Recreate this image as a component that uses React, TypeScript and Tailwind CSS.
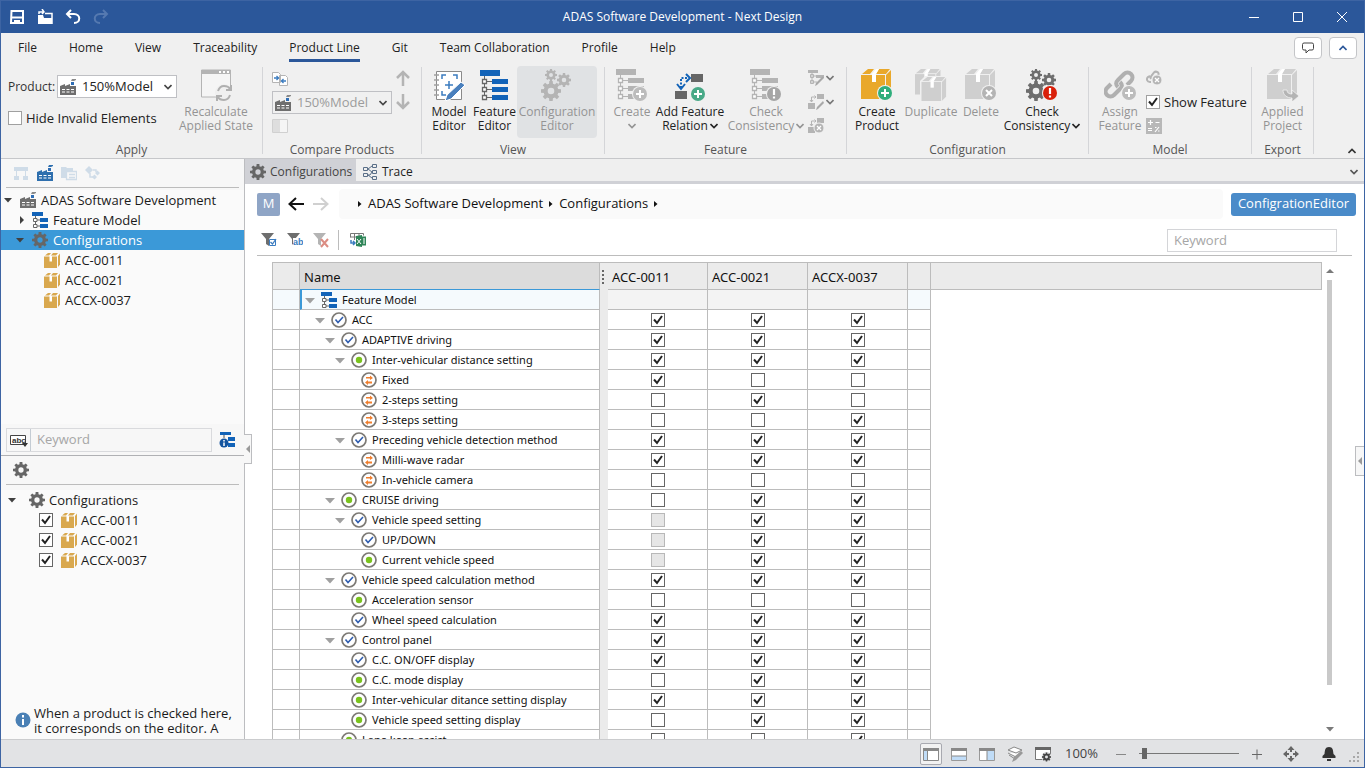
import { ReactNode } from 'react'
import clsx from 'clsx'

type TKind = 'model' | 'mandatory' | 'optional' | 'alternative'
type TCell = 0 | 1 | 2

type TFeature = {
  name: string
  level: number
  kind: TKind
  expanded?: boolean
  cells?: [TCell, TCell, TCell]
}

const PRODUCTS = ['ACC-0011', 'ACC-0021', 'ACCX-0037']

// cells: 0 = off, 1 = on, 2 = disabled
const FEATURES: TFeature[] = [
  { name: 'Feature Model', level: 0, kind: 'model', expanded: true },
  { name: 'ACC', level: 1, kind: 'mandatory', expanded: true, cells: [1, 1, 1] },
  { name: 'ADAPTIVE driving', level: 2, kind: 'mandatory', expanded: true, cells: [1, 1, 1] },
  { name: 'Inter-vehicular distance setting', level: 3, kind: 'optional', expanded: true, cells: [1, 1, 1] },
  { name: 'Fixed', level: 4, kind: 'alternative', cells: [1, 0, 0] },
  { name: '2-steps setting', level: 4, kind: 'alternative', cells: [0, 1, 0] },
  { name: '3-steps setting', level: 4, kind: 'alternative', cells: [0, 0, 1] },
  { name: 'Preceding vehicle detection method', level: 3, kind: 'mandatory', expanded: true, cells: [1, 1, 1] },
  { name: 'Milli-wave radar', level: 4, kind: 'alternative', cells: [1, 1, 1] },
  { name: 'In-vehicle camera', level: 4, kind: 'alternative', cells: [0, 0, 0] },
  { name: 'CRUISE driving', level: 2, kind: 'optional', expanded: true, cells: [0, 1, 1] },
  { name: 'Vehicle speed setting', level: 3, kind: 'mandatory', expanded: true, cells: [2, 1, 1] },
  { name: 'UP/DOWN', level: 4, kind: 'mandatory', cells: [2, 1, 1] },
  { name: 'Current vehicle speed', level: 4, kind: 'optional', cells: [2, 1, 1] },
  { name: 'Vehicle speed calculation method', level: 2, kind: 'mandatory', expanded: true, cells: [1, 1, 1] },
  { name: 'Acceleration sensor', level: 3, kind: 'optional', cells: [0, 0, 0] },
  { name: 'Wheel speed calculation', level: 3, kind: 'mandatory', cells: [1, 1, 1] },
  { name: 'Control panel', level: 2, kind: 'mandatory', expanded: true, cells: [1, 1, 1] },
  { name: 'C.C. ON/OFF display', level: 3, kind: 'mandatory', cells: [1, 1, 1] },
  { name: 'C.C. mode display', level: 3, kind: 'optional', cells: [0, 1, 1] },
  { name: 'Inter-vehicular ditance setting display', level: 3, kind: 'optional', cells: [1, 1, 1] },
  { name: 'Vehicle speed setting display', level: 3, kind: 'optional', cells: [0, 1, 1] },
  { name: 'Lane keep assist', level: 2, kind: 'optional', cells: [0, 0, 1] },
]

const MENU = ['File', 'Home', 'View', 'Traceability', 'Product Line', 'Git', 'Team Collaboration', 'Profile', 'Help']

/* ---------- icons ---------- */

const Svg = ({ size = 16, className, children }: { size?: number; className?: string; children: ReactNode }) => (
  <svg width={size} height={size} viewBox={`0 0 ${size} ${size}`} className={clsx('shrink-0', className)} fill="none" aria-hidden="true">
    {children}
  </svg>
)

const FactoryIcon = ({ body = '#6e6e6e', accent = '#2f6eb5', smoke = '#8a8a8a' }) => (
  <Svg>
    <path d="M0 16V7l5-2v2l5-2v2h6v9z" fill={body} />
    <path d="M11 3h3v3h-3z" fill={accent} />
    <path d="M11 2l1-2h4v1l-2 1z" fill={smoke} />
    <path d="M2 10.500h3M6.500 10.500h3M11 10.500h3M2 13h3M6.500 13h3M11 13h3" stroke="#fff" strokeWidth="1.200" />
  </Svg>
)

const TreeBars = ({ bar = '#1263b8', line = '#666' }) => (
  <>
    <path d="M0 0h20v6H0zM12 9h16v5H12zM12 17h16v5H12zM12 25h16v5H12z" fill={bar} />
    <path d="M4.500 6v3M4.500 14v3M4.500 22v3M7 11.500h5M7 19.500h5M7 27.500h5" stroke={line} strokeWidth="1" />
    <path d="M2.500 9.500h4v4h-4zM2.500 17.500h4v4h-4zM2.500 25.500h4v4h-4z" stroke={line} strokeWidth="1.300" fill="#fff" />
  </>
)

const FeatureModelIcon = () => (
  <Svg>
    <path d="M0 0h11v4H0zM8 6h8v4H8zM8 12h8v4H8z" fill="#1263b8" />
    <path d="M3.500 4v2M3.500 10v2M5 8h3M5 14h3" stroke="#666" />
    <path d="M1.500 6.500h3.500v3H1.500zM1.500 12.500h3.500v3H1.500z" stroke="#666" fill="#fff" />
  </Svg>
)

const TEETH = [0, 45, 90, 135, 180, 225, 270, 315]

const GearShape = ({ cx, cy, r, color = '#666' }: { cx: number; cy: number; r: number; color?: string }) => (
  <g>
    <circle cx={cx} cy={cy} r={r * 0.54} stroke={color} strokeWidth={r * 0.42} />
    {TEETH.map(angle => (
      <path
        key={angle}
        d={`M${cx - r * 0.2} ${cy - r * 0.65}L${cx - r * 0.17} ${cy - r}h${r * 0.34}L${cx + r * 0.2} ${cy - r * 0.65}z`}
        fill={color}
        transform={`rotate(${angle} ${cx} ${cy})`}
      />
    ))}
  </g>
)

const GearIcon = ({ color = '#666' }) => (
  <Svg>
    <GearShape cx={8} cy={8} r={8} color={color} />
  </Svg>
)

const BoxIcon = () => (
  <Svg>
    <path d="M0 4.500h13V16H0z" fill="#d9a84e" />
    <path d="M1 3.500L4 1h3L5 3.500zM7 3.500L9 1h5l-2 2.500z" fill="#d9a84e" />
    <path d="M14 4l2-2.500v11L14 15z" fill="#d9a84e" />
    <path d="M5.500 4h2.500v5.500H5.500z" fill="#fff" />
  </Svg>
)

const BigBox = ({ color }: { color: string }) => (
  <>
    <path d="M0 6h24v24H0z" fill={color} />
    <path d="M1 5l6-5h6L9 5zM15 5l3-5h11l-4 5z" fill={color} />
    <path d="M25 6l5-5v23l-5 5z" fill={color} />
    <path d="M11 5h4v8h-4z" fill="#fff" />
    <path d="M11 5l4-5h3l-3 5z" fill="#fff" />
  </>
)

const Badge = ({ color, kind, x = 24, y = 24 }: { color: string; kind: 'plus' | 'cross' | 'alert'; x?: number; y?: number }) => (
  <g transform={`translate(${x} ${y})`}>
    <circle r="8" fill="#f0f0f0" />
    <circle r="7" fill={color} />
    {kind === 'plus' && <path d="M-4 0h8M0-4v8" stroke="#fff" strokeWidth="2" />}
    {kind === 'cross' && <path d="M-3-3l6 6M3-3l-6 6" stroke="#fff" strokeWidth="2" />}
    {kind === 'alert' && <path d="M0-5v6M0 2.500v2" stroke="#fff" strokeWidth="2.200" />}
  </g>
)

const KindIcon = ({ kind }: { kind: TKind }) => {
  if (kind === 'model') return <FeatureModelIcon />
  return (
    <Svg>
      <circle cx="8" cy="8" r="7" stroke="#7d7a75" strokeWidth="1.700" fill="#fff" />
      {kind === 'mandatory' && <path d="M4.500 7.500l2.500 3 5-5.500" stroke="#2e5cae" strokeWidth="1.600" />}
      {kind === 'optional' && <circle cx="8" cy="8" r="3.200" fill="#7ac31d" />}
      {kind === 'alternative' && (
        <path d="M5 5h4V3.500L12 6 9 8V6.500H5zM11 9.500H7V8L4 10.500 7 13v-1.500h4z" fill="#f07f2e" />
      )}
    </Svg>
  )
}

const Chevron = ({ className, up }: { className?: string; up?: boolean }) => (
  <svg width="8" height="6" viewBox="0 0 8 6" fill="none" className={clsx('shrink-0', className)} aria-hidden="true">
    <path d={up ? 'M0.500 5L4 1.500 7.500 5' : 'M0.500 1L4 4.500 7.500 1'} stroke="currentColor" strokeWidth="1.600" />
  </svg>
)

const Caret = ({ dir = 'down', color = '#404040' }: { dir?: 'down' | 'right' | 'up' | 'left'; color?: string }) => {
  const paths = { down: 'M0 2h8L4 6.500z', right: 'M2 0v8l4-4z', up: 'M0 6h8L4 2z', left: 'M6 0v8L2 4z' }
  return (
    <svg width="8" height="8" viewBox="0 0 8 8" className="shrink-0" aria-hidden="true">
      <path d={paths[dir]} fill={color} />
    </svg>
  )
}

const CrumbMark = () => (
  <svg width="4" height="6" viewBox="0 0 4 6" className="shrink-0" aria-hidden="true">
    <path d="M0 0v6l3.500-3z" fill="#111" />
  </svg>
)

const GEARS: [number, number, number][] = [
  [10, 6, 6],
  [23, 11, 7],
  [10, 22, 10],
]

const GearsIcon = ({ color, alert }: { color: string; alert?: boolean }) => (
  <Svg size={32}>
    {GEARS.map(([cx, cy, r]) => (
      <GearShape key={r} cx={cx} cy={cy} r={r} color={color} />
    ))}
    {alert && <Badge color="#d9200a" kind="alert" />}
  </Svg>
)

/* ---------- form bits ---------- */

const CheckBox = ({ label, checked, disabled, light }: { label: string; checked?: boolean; disabled?: boolean; light?: boolean }) => (
  <span className="grid size-3.5 shrink-0">
    <input
      type="checkbox"
      aria-label={label}
      defaultChecked={checked}
      disabled={disabled}
      className={clsx(
        'peer size-3.5 appearance-none border bg-white [grid-area:1/1] disabled:border-[#b8b8b8] disabled:bg-[#e6e6e6]',
        light ? 'border-[#a0a0a0]' : 'border-[#666]'
      )}
    />
    <svg
      width="14"
      height="14"
      viewBox="0 0 14 14"
      fill="none"
      className="pointer-events-none invisible [grid-area:1/1] peer-checked:visible"
      aria-hidden="true"
    >
      <path d="M3 6.500l3 3.500 5-7" stroke="#222" strokeWidth="2" />
    </svg>
  </span>
)

const ModelSelect = ({ label, disabled }: { label: string; disabled?: boolean }) => (
  <div className={clsx('flex h-[23px] w-[120px] shrink-0 items-center border border-[#bfc0c4] px-0.5', !disabled && 'bg-white')}>
    <FactoryIcon />
    <select
      aria-label={label}
      disabled={disabled}
      className="w-full min-w-0 appearance-none bg-transparent pl-1.5 text-[13px] text-[#222] disabled:text-[#9c9c9c]"
    >
      <option>150%Model</option>
    </select>
    <Chevron className="mr-0.5 text-[#444]" />
  </div>
)

/* ---------- ribbon ---------- */

type TRibbonButtonProps = {
  icon: ReactNode
  lines: string[]
  width: string
  disabled?: boolean
  active?: boolean
  menu?: boolean
}

const RibbonButton = ({ icon, lines, width, disabled, active, menu }: TRibbonButtonProps) => (
  <button
    type="button"
    disabled={disabled}
    className={clsx(
      'flex h-[72px] shrink-0 flex-col items-center pt-[3px] text-xs leading-[14px] whitespace-nowrap',
      width,
      disabled ? 'text-[#949494]' : 'text-[#222]',
      active && 'rounded-sm bg-[#e0e2e4]'
    )}
  >
    {icon}
    <span className="mt-1 flex flex-col items-center">
      {lines.map((line, i) => (
        <span key={line} className="flex items-center gap-0.5">
          {line}
          {menu && lines.length > 1 && i === lines.length - 1 && <Chevron />}
        </span>
      ))}
      {menu && lines.length === 1 && <Chevron className="mt-1" />}
    </span>
  </button>
)

const RibbonGroup = ({ title, width, children }: { title: string; width: string; children: ReactNode }) => (
  <section className={clsx('flex shrink-0', width)} aria-label={title}>
    <div className="flex min-w-0 flex-1 flex-col">
      <div className="flex h-[72px] gap-1">{children}</div>
      <h2 className="mt-1 text-center text-xs leading-4 text-[#555]">{title}</h2>
    </div>
    <div className="mt-px mb-1 w-px bg-[#d4d5d8]" />
  </section>
)

const SmallTree = () => (
  <>
    <path d="M0 0h10v3H0zM8 5h8v3H8z" fill="#b4b4b4" />
    <path d="M2.500 4.500h3v3h-3zM2.500 10.500h3v3h-3zM4 3v11M6 6h2M6 12h3" stroke="#b4b4b4" />
  </>
)

const SmallRelation = () => (
  <>
    <path d="M9 0h7v5H9zM0 9h7v6H0z" fill="#b4b4b4" />
    <path d="M3.500 8V3H8M2 6l1.500 2L5 6M6.500 1.500L8 3 6.500 4.500" stroke="#b4b4b4" />
  </>
)

const Ribbon = () => (
  <div className="flex h-[97px] overflow-hidden border-b border-[#c6c7ca] pt-1">
    <RibbonGroup title="Apply" width="w-[262px]">
      <div className="flex w-[173px] shrink-0 flex-col gap-3 pt-[9px] pl-[7px]">
        <div className="flex items-center gap-[5px]">
          <span className="w-11 text-xs text-[#333]">Product:</span>
          <ModelSelect label="Product" />
        </div>
        <label className="flex items-center gap-1 text-[13px] leading-4 whitespace-nowrap text-[#222]">
          <CheckBox label="Hide Invalid Elements" light />
          Hide Invalid Elements
        </label>
      </div>
      <RibbonButton
        width="w-[76px]"
        disabled
        lines={['Recalculate', 'Applied State']}
        icon={
          <Svg size={32}>
            <path d="M1.500 1h29v27h-29z" stroke="#b4b4b4" fill="#f5f5f5" />
            <path d="M1 1h30v4H1z" fill="#b4b4b4" />
            <path d="M19 3h2M23 3h2M27 3h2" stroke="#fff" strokeWidth="2" />
            <circle cx="24" cy="24" r="9" fill="#f0f0f0" />
            <path d="M18 22c1-3 3-5 6-5s5 1 6 3M31 16v5h-5M30 26c-1 3-3 5-6 5s-5-1-6-3M17 32v-5h5" stroke="#b0b0b0" strokeWidth="2" />
          </Svg>
        }
      />
    </RibbonGroup>

    <RibbonGroup title="Compare Products" width="w-[159px]">
      <div className="flex flex-col gap-1 pt-1 pl-[9px]">
        <button type="button" aria-label="Compare" disabled className="h-[17px] w-4">
          <Svg>
            <path d="M0.500 1.500h6l2 2v8h-8zM7.500 4.500h6l2 2v8h-8z" stroke="#b4b4b4" fill="#fff" />
            <path d="M2 7h5M4.500 5l2 2-2 2M14 10h-5M11.500 8l-2 2 2 2" stroke="#3b7cc0" strokeWidth="1.300" />
          </Svg>
        </button>
        <ModelSelect label="Compared product" disabled />
        <button type="button" aria-label="Side by side" disabled className="h-4 w-4">
          <Svg>
            <path d="M0.500 1.500h15v13H0.500z" stroke="#d0d0d0" fill="#f5f5f5" />
            <path d="M1 2h7v12H1z" fill="#dedede" />
          </Svg>
        </button>
      </div>
      <div className="flex flex-col gap-2 pt-1">
        <button type="button" aria-label="Previous difference" disabled>
          <Svg>
            <path d="M7 16V2M1 8l6-6 6 6" stroke="#b4b4b4" strokeWidth="2.500" />
          </Svg>
        </button>
        <button type="button" aria-label="Next difference" disabled>
          <Svg>
            <path d="M7 0v14M1 8l6 6 6-6" stroke="#b4b4b4" strokeWidth="2.500" />
          </Svg>
        </button>
      </div>
    </RibbonGroup>

    <RibbonGroup title="View" width="w-[183px]">
      <RibbonButton
        width="ml-1 w-[46px]"
        lines={['Model', 'Editor']}
        icon={
          <Svg size={32}>
            <path d="M3.500 2.500h25v28h-25z" stroke="#8a8a8a" fill="#fff" />
            <path d="M1 6h5M1 11h5M1 16h5M1 21h5M1 26h5" stroke="#a0a0a0" strokeWidth="1.500" />
            <path d="M9 10V6h4M20 6h4v4M9 22v4h4M16 12v8M12 16h8" stroke="#3b7cc0" strokeWidth="1.500" />
            <path d="M12 32l2-6 14-13 4 3-14 14z" fill="#4a80bd" stroke="#fff" />
          </Svg>
        }
      />
      <RibbonButton
        width="w-[37px]"
        lines={['Feature', 'Editor']}
        icon={
          <Svg size={32}>
            <g transform="translate(1 1)">
              <TreeBars />
            </g>
          </Svg>
        }
      />
      <RibbonButton width="w-20" lines={['Configuration', 'Editor']} disabled active icon={<GearsIcon color="#b4b4b4" />} />
    </RibbonGroup>

    <RibbonGroup title="Feature" width="w-[242px]">
      <RibbonButton
        width="ml-[7px] w-10"
        lines={['Create']}
        disabled
        menu
        icon={
          <Svg size={32}>
            <TreeBars bar="#b4b4b4" line="#b4b4b4" />
            <Badge color="#bcbcbc" kind="plus" x={24} y={25} />
          </Svg>
        }
      />
      <RibbonButton
        width="w-[68px]"
        lines={['Add Feature', 'Relation']}
        menu
        icon={
          <Svg size={32}>
            <path d="M17 5h12v8H17zM1 22h12v8H1z" fill="#666" />
            <path d="M7 19V9h7" stroke="#1263b8" strokeWidth="2" strokeDasharray="2 1.500" />
            <path d="M3 15l4 5 4-5M12 5l4 4-4 4" stroke="#1263b8" strokeWidth="2" />
            <Badge color="#48a987" kind="plus" x={24} y={25} />
          </Svg>
        }
      />
      <RibbonButton
        width="w-[76px]"
        lines={['Check', 'Consistency']}
        disabled
        menu
        icon={
          <Svg size={32}>
            <TreeBars bar="#b4b4b4" line="#b4b4b4" />
            <Badge color="#a6a6a6" kind="alert" x={24} y={25} />
          </Svg>
        }
      />
      <div className="flex flex-col gap-2 pt-1 text-[#777]">
        <button type="button" aria-label="Edit feature" disabled className="flex items-center gap-0.5">
          <Svg>
            <SmallTree />
            <path d="M7 16l1-3 7-7 1 2-7 7z" fill="#a8a8a8" />
          </Svg>
          <Chevron />
        </button>
        <button type="button" aria-label="Edit relation" disabled className="flex items-center gap-0.5">
          <Svg>
            <SmallRelation />
            <path d="M8 16l1-3 6-6 1 2-6 6z" fill="#a8a8a8" />
          </Svg>
          <Chevron />
        </button>
        <button type="button" aria-label="Delete relation" disabled>
          <Svg>
            <SmallRelation />
            <circle cx="11" cy="10" r="5" fill="#b4b4b4" stroke="#f0f0f0" />
            <path d="M9 8l4 4M13 8l-4 4" stroke="#fff" strokeWidth="1.300" />
          </Svg>
        </button>
      </div>
    </RibbonGroup>

    <RibbonGroup title="Configuration" width="w-[242px]">
      <RibbonButton
        width="ml-[7px] w-[46px]"
        lines={['Create', 'Product']}
        icon={
          <Svg size={32}>
            <BigBox color="#e9a82b" />
            <Badge color="#2fae7c" kind="plus" />
          </Svg>
        }
      />
      <RibbonButton
        width="w-[54px]"
        lines={['Duplicate']}
        disabled
        icon={
          <Svg size={32}>
            <g transform="scale(0.850)">
              <BigBox color="#cfcfcf" />
            </g>
            <path d="M5 12l5-5h22v20l-4 5H5z" fill="#f0f0f0" />
            <g transform="translate(6.500 8) scale(0.820)">
              <BigBox color="#cfcfcf" />
            </g>
          </Svg>
        }
      />
      <RibbonButton
        width="w-[38px]"
        lines={['Delete']}
        disabled
        icon={
          <Svg size={32}>
            <BigBox color="#cfcfcf" />
            <Badge color="#b4b4b4" kind="cross" />
          </Svg>
        }
      />
      <RibbonButton width="w-[76px]" lines={['Check', 'Consistency']} menu icon={<GearsIcon color="#6e6e6e" alert />} />
    </RibbonGroup>

    <RibbonGroup title="Model" width="w-[163px]">
      <RibbonButton
        width="ml-[9px] w-11"
        lines={['Assign', 'Feature']}
        disabled
        icon={
          <Svg size={32}>
            <path
              d="M14 18c-3-3-2-5 0-7l6-6c2-2 5-2 7 0s2 5 0 7l-4 4M16 13c3 3 2 5 0 7l-6 6c-2 2-5 2-7 0s-2-5 0-7l4-4"
              stroke="#b0b0b0"
              strokeWidth="4"
            />
            <Badge color="#bcbcbc" kind="plus" x={25} y={24} />
          </Svg>
        }
      />
      <div className="flex flex-col items-start gap-2 pt-1">
        <button type="button" aria-label="Unassign feature" disabled>
          <Svg>
            <path d="M5 12H4c-3 0-4-3-2-5l2-1M5 9c-1-2 0-3 1-4l2-2.500c2-2 6 0 4 3" stroke="#b4b4b4" strokeWidth="2" />
            <circle cx="11" cy="10" r="5" fill="#b4b4b4" stroke="#f0f0f0" />
            <path d="M9 8l4 4M13 8l-4 4" stroke="#fff" strokeWidth="1.300" />
          </Svg>
        </button>
        <label className="flex items-center gap-1 text-[13px] leading-4 whitespace-nowrap text-[#222]">
          <CheckBox label="Show Feature" checked light />
          Show Feature
        </label>
        <button type="button" aria-label="Formula" disabled>
          <Svg>
            <path d="M0 0h16v16H0z" fill="#b8b8b8" />
            <path d="M2 4.500h5M4.500 2v5M9.500 4.500h4M2 10.500h4M2 12.500h4M9 14l4-5M9 9.500h1.500M12 13h1.500" stroke="#fff" strokeWidth="1.200" />
          </Svg>
        </button>
      </div>
    </RibbonGroup>

    <RibbonGroup title="Export" width="w-[62px]">
      <RibbonButton
        width="mx-auto w-[50px]"
        lines={['Applied', 'Project']}
        disabled
        icon={
          <Svg size={32}>
            <BigBox color="#cfcfcf" />
            <path d="M16 21h4c0 3 2 4 5 4v-4l7 6-7 6v-4c-5 0-9-3-9-8z" fill="#b4b4b4" stroke="#f0f0f0" strokeWidth="0.800" />
          </Svg>
        }
      />
    </RibbonGroup>
    <button type="button" aria-label="Collapse ribbon" className="mr-2 mb-1 ml-auto self-end text-[#333]">
      <Chevron up />
    </button>
  </div>
)

/* ---------- window chrome ---------- */

const TitleBar = () => (
  <header className="grid h-8 shrink-0 grid-cols-[1fr_auto_1fr] items-center bg-[#2b579a] text-white">
    <div className="flex items-center gap-3 pl-2">
      <button type="button" aria-label="Save">
        <Svg>
          <path d="M2.500 2h11.500v12H2z" stroke="#fff" strokeWidth="2" />
          <path d="M2 8.500h12M5 12h6M6 11v4M10 11v4" stroke="#fff" strokeWidth="2" />
        </Svg>
      </button>
      <button type="button" aria-label="Open">
        <Svg>
          <path d="M1 15V6h5l1 3h8v6z" fill="#fff" />
          <path d="M8 4.500h7V15M2 5V3h5M5 0l2 3-2 2" stroke="#fff" strokeWidth="1.500" />
        </Svg>
      </button>
      <button type="button" aria-label="Undo">
        <Svg>
          <path d="M6 1L2 5l4 4M2 5h7c7 0 7 9 0 9" stroke="#fff" strokeWidth="2" />
        </Svg>
      </button>
      <button type="button" aria-label="Redo" disabled>
        <Svg>
          <path d="M10 1l4 4-4 4M14 5H7C0 5 0 14 7 14" stroke="#5579b0" strokeWidth="2" />
        </Svg>
      </button>
    </div>
    <h1 className="text-xs">ADAS Software Development - Next Design</h1>
    <div className="flex items-center justify-end gap-7 pr-3.5">
      <button type="button" aria-label="Minimize">
        <Svg>
          <path d="M3 8.500h10" stroke="#fff" />
        </Svg>
      </button>
      <button type="button" aria-label="Maximize">
        <Svg>
          <path d="M3.500 3.500h9v9h-9z" stroke="#fff" />
        </Svg>
      </button>
      <button type="button" aria-label="Close">
        <Svg>
          <path d="M3 3l10 10M13 3L3 13" stroke="#fff" />
        </Svg>
      </button>
    </div>
  </header>
)

const MenuBar = () => (
  <nav className="flex h-[29px] shrink-0 items-stretch pl-[17px]">
    <div className="flex gap-8">
      {MENU.map(item => (
        <a
          key={item}
          href="#"
          className={clsx(
            'border-b-[3px] text-xs leading-[29px] whitespace-nowrap text-[#222]',
            item === 'Product Line' ? 'border-[#2b579a]' : 'border-transparent'
          )}
        >
          {item}
        </a>
      ))}
    </div>
    <div className="mt-1 mr-[7px] ml-auto flex gap-[7px]">
      <button type="button" aria-label="Feedback" className="grid h-[22px] w-7 place-items-center rounded border border-[#c4c5c8] bg-white">
        <Svg>
          <path d="M4 3h8q1.500 0 1.500 1.500v4Q13.500 10 12 10H9l-3 3v-3H4q-1.500 0-1.500-1.500v-4Q2.500 3 4 3z" stroke="#444" />
        </Svg>
      </button>
      <button type="button" aria-label="Hide menu" className="grid h-[22px] w-7 place-items-center rounded border border-[#c4c5c8] bg-white text-[#2b579a]">
        <Chevron up />
      </button>
    </div>
  </nav>
)

/* ---------- left panel ---------- */

const LeftPanel = () => (
  <aside className="relative flex w-[244px] shrink-0 flex-col border-r border-[#bcbdc0] bg-[#f7f7f7] text-[13px] text-[#1a1a1a]">
    <div className="mr-[5px] ml-[5px] flex h-[29px] shrink-0 items-center gap-2 border-b border-[#bcbcbc] pl-[7px]">
      <button type="button" aria-label="Model view">
        <Svg>
          <path d="M1 2h14v4H1zM1 11h5v4H1zM10 11h5v4h-5z" fill="#cfdce8" />
          <path d="M3.500 6v5M12.500 6v5" stroke="#cfdce8" />
        </Svg>
      </button>
      <button type="button" aria-label="Product line view">
        <FactoryIcon body="#2e6fae" smoke="#2e6fae" />
      </button>
      <button type="button" aria-label="Profile view">
        <Svg>
          <path d="M0 2h5l1 1h6v3H5v7H0z" fill="#cfdce8" />
          <path d="M5.500 6.500h10v8h-10zM8 9.500h6M8 12.500h6" stroke="#cfdce8" strokeWidth="1.300" />
        </Svg>
      </button>
      <button type="button" aria-label="Relation view">
        <Svg>
          <path d="M0 5l4-4 4 4-4 4z" fill="#cfdce8" />
          <path d="M8 5h3v2M5 8v4h3" stroke="#cfdce8" strokeWidth="1.500" />
          <path d="M7 12l2.500-2.500L12 12l-2.500 2.500zM10 8l2.500-2.500L15 8l-2.500 2.500z" fill="#cfdce8" />
        </Svg>
      </button>
    </div>

    <ul className="mt-0.5 min-h-0 flex-1 overflow-hidden bg-[#fafafa] leading-5">
      <li className="flex h-5 items-center pl-[3px]">
        <Caret />
        <span className="ml-2 flex items-center gap-[5px]">
          <FactoryIcon />
          ADAS Software Development
        </span>
      </li>
      <li className="flex h-5 items-center pl-[17px]">
        <Caret dir="right" />
        <span className="ml-1.5 flex items-center gap-[5px]">
          <FeatureModelIcon />
          Feature Model
        </span>
      </li>
      <li className="flex h-5 items-center bg-[#3b99d8] pl-[15px] text-white">
        <Caret />
        <span className="ml-2 flex items-center gap-[5px]">
          <GearIcon />
          Configurations
        </span>
      </li>
      {PRODUCTS.map(product => (
        <li key={product} className="flex h-5 items-center gap-[5px] pl-[43px]">
          <BoxIcon />
          {product}
        </li>
      ))}
    </ul>

    <div className="flex h-8 shrink-0 items-start border-b border-[#b0b1b4] pt-1 pb-1 pl-[5px]">
      <div className="flex h-6 w-[206px] items-center border border-[#d9dadd]">
        <button type="button" aria-label="Search mode" className="flex h-full w-6 items-center justify-center border-r border-[#c4ccd4]">
          <svg width="18" height="14" viewBox="0 0 18 14" aria-hidden="true">
            <path d="M0.500 2.500h15v9H0.500z" stroke="#444" fill="#fff" />
            <text x="2" y="10" fontSize="8" fontWeight="700" fill="#333" fontFamily="Liberation Sans, sans-serif">
              abc
            </text>
            <path d="M12 10h6l-3 4z" fill="#333" />
          </svg>
        </button>
        <input
          aria-label="Search tree"
          placeholder="Keyword"
          className="min-w-0 flex-1 bg-transparent pl-1.5 outline-none placeholder:text-[#a6a6a6]"
        />
      </div>
      <button type="button" aria-label="Feature details" className="mt-1 ml-[7px]">
        <Svg>
          <path d="M1 0h11v3H1zM9 5h7v4H9zM9 11h7v4H9z" fill="#1263b8" />
          <path d="M5 3v3" stroke="#555" />
          <circle cx="5" cy="11" r="4.500" fill="#14559f" />
          <path d="M5 8v1.500M5 10.500V14" stroke="#fff" strokeWidth="1.500" />
        </Svg>
      </button>
    </div>

    <div className="mr-[5px] ml-[5px] flex h-[29px] shrink-0 items-center border-b border-[#bcbcbc] pl-[7px]">
      <GearIcon />
    </div>
    <div className="mt-[5px] shrink-0 bg-[#fafafa] pb-[136px] leading-5">
      <div className="flex h-5 items-center pl-[7px]">
        <Caret />
        <span className="ml-[13px] flex items-center gap-1">
          <GearIcon />
          Configurations
        </span>
      </div>
      {PRODUCTS.map(product => (
        <label key={product} className="flex h-5 items-center pl-[38px]">
          <CheckBox label={product} checked />
          <span className="ml-2 flex items-center gap-1">
            <BoxIcon />
            {product}
          </span>
        </label>
      ))}
    </div>
    <div className="flex h-[33px] shrink-0 items-start gap-[3px] bg-[#fafafa] pr-3 pl-3.5">
      <Svg className="mt-1.5">
        <circle cx="8" cy="8" r="7.500" fill="#4a80b5" />
        <path d="M8 3v2.500M8 7v6" stroke="#fff" strokeWidth="2" />
      </Svg>
      <p className="leading-[15px]">When a product is checked here, it corresponds on the editor. A</p>
    </div>
    <button
      type="button"
      aria-label="Collapse left panel"
      className="absolute top-[275px] left-full z-10 grid h-[30px] w-2 place-items-center border border-l-0 border-[#bcbdc0] bg-[#f7f7f7]"
    >
      <Caret dir="left" color="#999" />
    </button>
  </aside>
)

/* ---------- editor ---------- */

const Funnel = ({ color = '#6e6e6e' }) => <path d="M0 1h13L8 7v7l-3-2V7z" fill={color} />

const EditorHeader = () => (
  <>
    <div className="flex h-[25px] shrink-0 items-stretch bg-[#efefef] text-xs shadow-[inset_0_-3px_0_#d0d1d6]">
      <button type="button" className="flex w-[111px] items-center gap-1 bg-[#d0d1d6] pl-[5px] text-[#444]">
        <GearIcon />
        Configurations
      </button>
      <button type="button" className="flex items-center gap-1 px-1.5 text-[#222]">
        <Svg>
          <path d="M1.500 3.500h4v3h-4zM1.500 9.500h4v3h-4zM10.500 0.500h4v3h-4zM10.500 6.500h4v3h-4zM10.500 12.500h4v3h-4z" stroke="#5a6f88" />
          <path d="M6 5l4-3M6 5l4 3M6 11h2l2-3M6 11l4 3" stroke="#5a6f88" />
        </Svg>
        Trace
      </button>
      <button type="button" aria-label="Open tabs" className="mr-1.5 ml-auto text-[#555]">
        <Chevron />
      </button>
    </div>

    <div className="mt-[5px] mr-2 ml-3 flex h-[30px] shrink-0 items-center text-[13px]">
      <button type="button" className="size-[23px] shrink-0 rounded-xs bg-[#8fa5c6] text-[13px] text-white">
        M
      </button>
      <button type="button" aria-label="Back" className="ml-2">
        <Svg>
          <path d="M16 8H2M8 2L1.500 8 8 14" stroke="#111" strokeWidth="2" />
        </Svg>
      </button>
      <button type="button" aria-label="Forward" disabled className="ml-[9px]">
        <Svg>
          <path d="M0 8h14M8 2l6.500 6L8 14" stroke="#d0d0d0" strokeWidth="2" />
        </Svg>
      </button>
      <nav className="ml-2.5 flex h-full min-w-0 flex-1 items-center gap-1.5 rounded bg-[#fafafa] pl-[19px] whitespace-nowrap text-[#111]">
        <CrumbMark />
        <a href="#">ADAS Software Development</a>
        <CrumbMark />
        <a href="#">Configurations</a>
        <CrumbMark />
      </nav>
      <button type="button" className="ml-2 h-[23px] w-[125px] shrink-0 rounded-[3px] bg-[#4a8bc9] text-[13px] text-white">
        ConfigrationEditor
      </button>
    </div>

    <div className="mr-3 ml-3 flex h-[37px] shrink-0 items-center border-b border-[#bcbcbc] pt-1.5 pl-1">
      <div className="flex items-center gap-2.5">
        <button type="button" aria-label="Filter by check">
          <Svg>
            <Funnel />
            <path d="M8.500 7.500h6v6h-6z" stroke="#3b7cc0" fill="#fff" />
            <path d="M9.500 10l2 2L15 7" stroke="#3b7cc0" strokeWidth="1.300" />
          </Svg>
        </button>
        <button type="button" aria-label="Filter by text">
          <Svg>
            <Funnel />
            <path d="M6 6h10v9H6z" fill="#fff" />
            <text x="6" y="13" fontSize="9" fontWeight="700" fill="#3b7cc0" fontFamily="Liberation Sans, sans-serif">
              ab
            </text>
          </Svg>
        </button>
        <button type="button" aria-label="Clear filter" disabled>
          <Svg>
            <Funnel color="#b4b4b4" />
            <path d="M8 7l7 8M15 7l-7 8" stroke="#dc8d83" strokeWidth="2" />
          </Svg>
        </button>
      </div>
      <div className="ml-[9px] h-5 w-px bg-[#bcbcbc]" />
      <button type="button" aria-label="Export to Excel" className="ml-[11px]">
        <Svg>
          <path d="M0.500 5.500v-4h13v2M0.500 5h6M4.500 1.500V8M9 1.500V4" stroke="#777" />
          <path d="M1 8v3h4M3 9l2 2-2 2" stroke="#3b7cc0" strokeWidth="1.500" />
          <path d="M6 4l6-1v12l-6-1zM12 4.500h4v9h-4z" fill="#2f8558" />
          <path d="M7 7l4 5M11 7l-4 5M13 7h2M13 9h2M13 11h2" stroke="#fff" />
        </Svg>
      </button>
      <input
        aria-label="Search configurations"
        placeholder="Keyword"
        className="mr-[15px] ml-auto h-[23px] w-[170px] border border-[#d4d5d8] pl-1.5 text-[13px] outline-none placeholder:text-[#a6a6a6]"
      />
    </div>
  </>
)

const CELL = 'border-r border-b border-[#bcbcbc] p-0'
const HEAD = 'h-7 border-t border-r border-b border-[#bcbcbc] bg-[#ebebeb] px-1 pt-1 pb-0 text-left font-normal'

const ConfigurationTable = () => (
  <table className="w-full table-fixed border-separate border-spacing-0 border-l border-[#bcbcbc] font-['Noto_Sans',sans-serif] text-[11px] text-[#111]">
    <colgroup>
      <col className="w-[27px]" />
      <col className="w-[300px]" />
      <col className="w-2" />
      <col className="w-[100px]" />
      <col className="w-[100px]" />
      <col className="w-[100px]" />
      <col className="w-[23px]" />
      <col />
    </colgroup>
    <thead className="text-[13px]">
      <tr>
        <th className={HEAD} />
        <th className="border-t border-r border-b border-[#bcbcbc] border-b-[#3b99d8] bg-[#dcdcdc] px-1 pt-1 pb-0 text-left font-normal">Name</th>
        <th className="border-t border-[#bcbcbc] bg-[#ebebeb] p-0">
          <svg width="6" height="16" viewBox="0 0 6 16" aria-hidden="true">
            <path d="M2 1h2v2H2zM2 5h2v2H2zM2 9h2v2H2zM2 13h2v2H2z" fill="#666" />
          </svg>
        </th>
        {PRODUCTS.map(product => (
          <th key={product} className={HEAD}>
            {product}
          </th>
        ))}
        <th className={HEAD} />
        <th className={HEAD} />
      </tr>
    </thead>
    <tbody>
      {FEATURES.map(feature => {
        const isRoot = feature.level === 0
        return (
          <tr key={feature.name}>
            <td className={clsx(CELL, isRoot ? 'bg-[#f5fafd]' : 'bg-white')} />
            <td className={clsx(CELL, isRoot ? 'border-l-2 border-l-[#3b99d8] bg-[#f5fafd]' : 'bg-white')}>
              <div
                className="flex h-[19px] items-center leading-[19px] whitespace-nowrap"
                style={{ paddingLeft: (isRoot ? 3 : 5) + feature.level * 10 }}
              >
                <span className="mr-1.5 flex w-2.5">
                  {feature.expanded && (
                    <svg width="10" height="8" viewBox="0 0 10 8" aria-hidden="true">
                      <path d="M0 2h10L5 7.500z" fill="#a0a0a0" />
                    </svg>
                  )}
                </span>
                <KindIcon kind={feature.kind} />
                <span className="ml-[5px]">{feature.name}</span>
              </div>
            </td>
            <td className="bg-[#ebebeb] p-0" />
            {PRODUCTS.map((product, i) => (
              <td key={product} className={clsx(CELL, isRoot && 'bg-[#f3f3f3]')}>
                {feature.cells && (
                  <div className="flex h-[19px] items-center justify-center">
                    <CheckBox
                      label={`${feature.name} in ${product}`}
                      checked={feature.cells[i] === 1}
                      disabled={feature.cells[i] === 2}
                    />
                  </div>
                )}
              </td>
            ))}
            <td className={clsx(CELL, isRoot && 'bg-[#f5fafd]')} />
            <td className="p-0" />
          </tr>
        )
      })}
    </tbody>
  </table>
)

const Editor = () => (
  <main className="relative flex min-w-0 flex-1 flex-col bg-white">
    <EditorHeader />
    <div className="mt-1.5 flex min-h-0 flex-1 pr-[27px] pl-[27px]">
      <div className="min-w-0 flex-1 overflow-hidden">
        <ConfigurationTable />
      </div>
      <div className="flex w-[15px] flex-col items-center pt-[5px] pb-1.5">
        <Caret dir="up" color="#7a7a7a" />
        <div className="mt-[5px] w-[5px] flex-1 bg-[#c9c9c9]" />
        <div className="h-10" />
        <Caret color="#7a7a7a" />
      </div>
    </div>
    <button
      type="button"
      aria-label="Expand right panel"
      className="absolute top-[287px] right-0 grid h-[30px] w-[9px] place-items-center border border-r-0 border-[#bcbdc0] bg-[#f7f7f7]"
    >
      <Caret dir="left" color="#999" />
    </button>
  </main>
)

/* ---------- status bar ---------- */

const StatusBar = () => (
  <footer className="flex h-7 shrink-0 items-center justify-end border-t border-[#cbccce] bg-[#e2e3e5] pr-[3px] text-[13px] text-[#444]">
    <div className="flex items-center gap-3">
      <button type="button" aria-label="Left pane" className="-mr-[3px] grid h-[22px] w-[22px] place-items-center rounded-xs border border-[#a8a9b0] bg-[#f2f2f2]">
        <Svg>
          <path d="M0.500 2.500h15v12H0.500z" stroke="#888" fill="#fff" />
          <path d="M0 2h16v3H0z" fill="#888" />
          <path d="M1 5h3v9H1z" fill="#c0dcf7" />
          <path d="M4.500 5v9" stroke="#888" />
        </Svg>
      </button>
      <button type="button" aria-label="Bottom pane">
        <Svg>
          <path d="M0.500 2.500h15v12H0.500z" stroke="#999" fill="#fff" />
          <path d="M0 2h16v3H0z" fill="#888" />
          <path d="M1 10h14v4H1z" fill="#c0dcf7" />
          <path d="M1 10h14" stroke="#888" />
        </Svg>
      </button>
      <button type="button" aria-label="Right pane">
        <Svg>
          <path d="M0.500 2.500h15v12H0.500z" stroke="#999" fill="#fff" />
          <path d="M0 2h16v3H0z" fill="#888" />
          <path d="M8 5h7v9H8z" fill="#c0dcf7" />
          <path d="M8 5v9" stroke="#888" />
        </Svg>
      </button>
      <button type="button" aria-label="Layers">
        <Svg>
          <path d="M1 4l6-3 8 3-6 3zM1 7l8 4 6-4M2 9l6 4" stroke="#888" fill="#fff" />
          <path d="M5 16l2-5 7-6 2 2-7 7z" fill="#999" />
        </Svg>
      </button>
      <button type="button" aria-label="View settings">
        <Svg>
          <path d="M0.500 2.500h15v11H0.500z" stroke="#777" fill="#fff" />
          <path d="M0 1h16v3H0z" fill="#666" />
          <circle cx="11.500" cy="11" r="5" fill="#e2e3e5" />
          <GearShape cx={11.5} cy={11} r={4.5} color="#444" />
        </Svg>
      </button>
    </div>
    <span className="ml-3.5 w-9">100%</span>
    <button type="button" aria-label="Zoom out" className="ml-3">
      <Svg>
        <path d="M3 8.500h10" stroke="#888" />
      </Svg>
    </button>
    <input
      type="range"
      aria-label="Zoom"
      defaultValue={3}
      className="ml-2.5 h-4 w-[100px] appearance-none bg-transparent [&::-webkit-slider-runnable-track]:h-px [&::-webkit-slider-runnable-track]:bg-[#777] [&::-webkit-slider-thumb]:-mt-[5px] [&::-webkit-slider-thumb]:h-[11px] [&::-webkit-slider-thumb]:w-[5px] [&::-webkit-slider-thumb]:appearance-none [&::-webkit-slider-thumb]:bg-[#666]"
    />
    <button type="button" aria-label="Zoom in" className="ml-2.5">
      <Svg>
        <path d="M3 8.500h10M8 3.500v10" stroke="#666" />
      </Svg>
    </button>
    <button type="button" aria-label="Fit to window" className="ml-[18px]">
      <Svg>
        <path d="M8 0l3.500 4h-7zM8 16l3.500-4h-7zM0 8l4-3.500v7zM16 8l-4-3.500v7z" fill="#666" />
        <path d="M7 4h2v2H7zM7 10h2v2H7zM4 7h2v2H4zM10 7h2v2h-2z" fill="#666" />
      </Svg>
    </button>
    <button type="button" aria-label="Notifications" className="ml-[22px]">
      <Svg>
        <path d="M8 1c4 0 4 3 4.500 7l2 2v2h-13v-2l2-2C4 4 4 1 8 1z" fill="#333" />
        <path d="M6 13h4v2H6z" fill="#333" />
      </Svg>
    </button>
    <Svg size={12} className="mt-2 ml-3">
      <path d="M8 0h2v2H8zM4 4h2v2H4zM8 4h2v2H8zM0 8h2v2H0zM4 8h2v2H4zM8 8h2v2H8z" fill="#a8a8a8" />
    </Svg>
  </footer>
)

export default function App() {
  return (
    <div className="flex h-screen flex-col overflow-hidden border border-[#3d64a3] bg-[#f0f0f0] font-['Open_Sans','Noto_Sans',sans-serif]">
      <TitleBar />
      <MenuBar />
      <div className="shrink-0">
        <Ribbon />
      </div>
      <div className="flex min-h-0 flex-1">
        <LeftPanel />
        <Editor />
      </div>
      <StatusBar />
    </div>
  )
}
